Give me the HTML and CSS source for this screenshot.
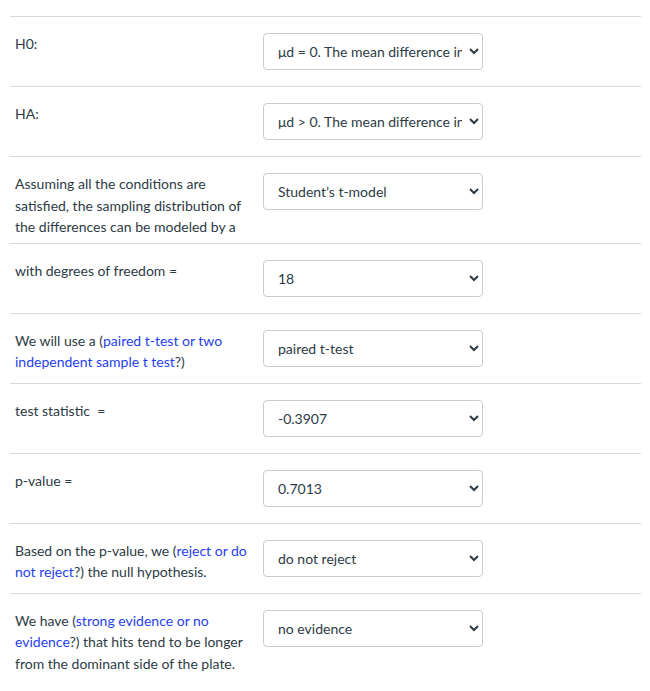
FILE: index.html
```html
<!DOCTYPE html>
<html>
<head>
<meta charset="utf-8">
<link rel="stylesheet" href="styles.css">
</head>
<body>
<div class="quiz">
  <div class="row">
    <div class="label">H0:</div>
    <select class="answer"><option>μd = 0. The mean difference in hit length is zero.</option></select>
  </div>
  <div class="row">
    <div class="label">HA:</div>
    <select class="answer"><option>μd &gt; 0. The mean difference in hit length is greater than zero.</option></select>
  </div>
  <div class="row">
    <div class="label">Assuming all the conditions are satisfied, the sampling distribution of the differences can be modeled by a</div>
    <select class="answer"><option>Student’s t-model</option></select>
  </div>
  <div class="row">
    <div class="label">with degrees of freedom =</div>
    <select class="answer"><option>18</option></select>
  </div>
  <div class="row">
    <div class="label">We will use a (<span class="hint">paired t-test or two independent sample t test</span>?)</div>
    <select class="answer"><option>paired t-test</option></select>
  </div>
  <div class="row">
    <div class="label">test statistic &nbsp;=</div>
    <select class="answer"><option>-0.3907</option></select>
  </div>
  <div class="row">
    <div class="label">p-value =</div>
    <select class="answer"><option>0.7013</option></select>
  </div>
  <div class="row">
    <div class="label">Based on the p-value, we (<span class="hint">reject or do not reject</span>?) the null hypothesis.</div>
    <select class="answer"><option>do not reject</option></select>
  </div>
  <div class="row">
    <div class="label">We have (<span class="hint">strong evidence or no evidence</span>?) that hits tend to be longer from the dominant side of the plate.</div>
    <select class="answer"><option>no evidence</option></select>
  </div>
</div>
</body>
</html>
```
FILE: styles.css
```css
html, body {
  margin: 0;
  padding: 0;
  background: #ffffff;
}
body {
  font-family: Lato, "Open Sans", sans-serif;
  font-size: 14px;
  color: #2d3b45;
}
.quiz {
  padding: 16px 9px 0 10px;
}
.row {
  display: grid;
  grid-template-columns: 238px 220px;
  column-gap: 10px;
  align-items: start;
  border-top: 1px solid #d7dadd;
  padding: 16px 0 5px 5px;
}
.label {
  line-height: 21.5px;
}
.hint {
  color: #1f3ff0;
}
.answer {
  height: 37px;
  width: 220px;
  margin-bottom: 11px;
  border: 1px solid #c7cdd1;
  border-radius: 4px;
  background: #ffffff;
  color: #2d3b45;
  font-family: Lato, "Open Sans", sans-serif;
  font-size: 14px;
  padding: 0 4px 0 10px;
}
```
